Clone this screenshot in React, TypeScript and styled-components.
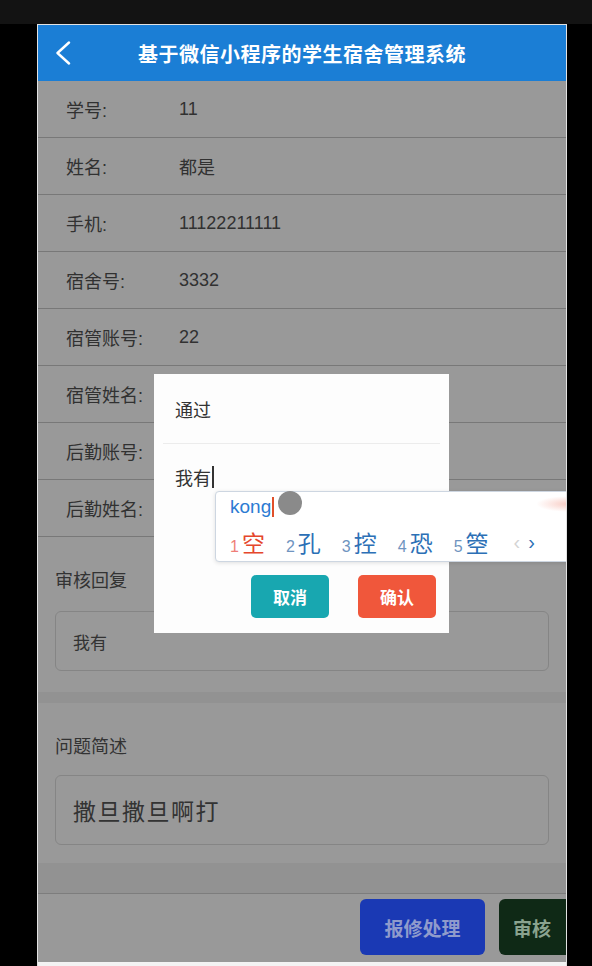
import React from "react";
import styled, { createGlobalStyle } from "styled-components";

const GlobalStyle = createGlobalStyle`
  html, body {
    margin: 0;
    padding: 0;
    background: #000;
  }
  * {
    box-sizing: border-box;
  }
  body {
    font-family: "Liberation Sans", "Noto Sans CJK SC", sans-serif;
  }
`;

const Screen = styled.div`
  width: 592px;
  height: 966px;
  overflow: hidden;
  background: #000;
  display: flex;
  flex-direction: column;
`;

const TopStrip = styled.div`
  height: 24px;
  flex-shrink: 0;
  background: #131313;
`;

const Phone = styled.div`
  position: relative;
  width: 530px;
  height: 942px;
  margin-left: 37px;
  border: 1px solid #e2e2e2;
  border-bottom: none;
  background: #f3f3f3;
  overflow: hidden;
`;

const NavBar = styled.div`
  height: 56px;
  background: #1b7ed5;
  display: grid;
  grid-template-columns: 1fr auto 1fr;
  align-items: center;
`;

const BackButton = styled.div`
  padding-left: 17px;
  display: flex;
  align-items: center;
`;

const Title = styled.div`
  color: #fff;
  font-size: 20px;
  font-weight: 700;
  letter-spacing: 0.5px;
  font-family: "Noto Sans CJK SC", sans-serif;
`;

const InfoList = styled.div`
  background: #fff;
`;

const InfoRow = styled.div`
  height: 57px;
  display: flex;
  align-items: center;
  padding-left: 28px;
  border-bottom: 1px solid #c9c9c9;
  font-size: 18px;
  color: #535353;
`;

const InfoLabel = styled.span`
  width: 113px;
  flex-shrink: 0;
`;

const InfoValue = styled.span``;

const Section = styled.div<{ $gapTop: number; $padBottom: number }>`
  background: #fff;
  margin-top: ${(p) => p.$gapTop}px;
  padding: 32px 17px ${(p) => p.$padBottom}px;
`;

const SectionLabel = styled.div<{ $gap: number }>`
  font-size: 18px;
  line-height: 24px;
  color: #565656;
  margin-bottom: ${(p) => p.$gap}px;
`;

const Field = styled.div<{ $height: number; $big?: boolean }>`
  height: ${(p) => p.$height}px;
  border: 1px solid #dedede;
  border-radius: 6px;
  display: flex;
  align-items: center;
  padding-left: 17px;
  color: #555;
  font-size: ${(p) => (p.$big ? "23px" : "17px")};
  letter-spacing: ${(p) => (p.$big ? "1.5px" : "0")};
`;

const Footer = styled.div`
  margin-top: 30px;
  border-top: 1px solid #d0d0d0;
  background: #fff;
  height: 69px;
  display: flex;
  justify-content: flex-end;
  gap: 14px;
  padding: 5px 0 7px;
  margin-right: -30px;
`;

const FooterButton = styled.div<{ $bg: string; $fg: string; $width: number }>`
  position: relative;
  z-index: 2;
  width: ${(p) => p.$width}px;
  height: 56px;
  border-radius: 6px;
  background: ${(p) => p.$bg};
  color: ${(p) => p.$fg};
  font-size: 19px;
  font-weight: 700;
  font-family: "Noto Sans CJK SC", sans-serif;
  display: flex;
  align-items: center;
  justify-content: center;
`;

const FooterTail = styled(FooterButton)`
  justify-content: flex-start;
  padding-left: 14px;
`;

const Mask = styled.div`
  position: absolute;
  top: 56px;
  left: 0;
  right: 0;
  bottom: 4px;
  background: rgba(0, 0, 0, 0.4);
  z-index: 1;
`;

const Dialog = styled.div`
  position: absolute;
  left: 116px;
  top: 349px;
  width: 295px;
  height: 259px;
  background: #fdfdfd;
  z-index: 3;
  padding: 0 9px;
  display: flex;
  flex-direction: column;
`;

const DialogField = styled.div<{ $height: number; $divider?: boolean }>`
  height: ${(p) => p.$height}px;
  display: flex;
  align-items: center;
  padding-left: 12px;
  font-size: 18px;
  color: #333;
  border-bottom: ${(p) => (p.$divider ? "1px solid #ececec" : "none")};
`;

const Caret = styled.span<{ $color: string; $h: number }>`
  display: inline-block;
  width: 1.5px;
  height: ${(p) => p.$h}px;
  background: ${(p) => p.$color};
  margin-left: 1px;
`;

const DialogActions = styled.div`
  margin-top: 65px;
  display: flex;
  justify-content: flex-end;
  gap: 29px;
  padding-right: 4px;
`;

const DialogButton = styled.div<{ $bg: string }>`
  width: 78px;
  height: 43px;
  border-radius: 5px;
  background: ${(p) => p.$bg};
  color: #fff;
  font-size: 17px;
  font-weight: 700;
  font-family: "Noto Sans CJK SC", sans-serif;
  display: flex;
  align-items: center;
  justify-content: center;
`;

const ImePanel = styled.div`
  position: absolute;
  left: 177px;
  top: 466px;
  width: 400px;
  height: 71px;
  background: #fff;
  border: 1px solid #cdd6e1;
  border-radius: 4px;
  box-shadow: 0 1px 4px rgba(0, 0, 0, 0.12);
  z-index: 4;
  padding-left: 14px;

  &::after {
    content: "";
    position: absolute;
    left: 320px;
    top: 4px;
    width: 64px;
    height: 16px;
    background: radial-gradient(
      ellipse at center,
      rgba(240, 130, 110, 0.4),
      rgba(255, 255, 255, 0) 70%
    );
  }
`;

const Composition = styled.div`
  height: 30px;
  display: flex;
  align-items: center;
  font-size: 19px;
  color: #2b7bd3;
`;

const TouchDot = styled.div`
  position: absolute;
  left: 62px;
  top: -1px;
  width: 24px;
  height: 24px;
  border-radius: 50%;
  background: #8a8a8a;
`;

const Candidates = styled.div`
  height: 40px;
  display: flex;
  align-items: center;
`;

const Candidate = styled.span<{ $active?: boolean }>`
  display: inline-flex;
  align-items: baseline;
  gap: 3px;
  margin-right: 21px;
  color: ${(p) => (p.$active ? "#e5472d" : "#2c70b6")};
  font-size: 23px;
  font-family: "Noto Sans CJK SC", sans-serif;

  & > b {
    font-weight: 400;
    font-size: 16px;
    font-family: "Liberation Sans", sans-serif;
    color: ${(p) => (p.$active ? "#ef7e78" : "#6f94c0")};
  }
`;

const Pager = styled.span<{ $on?: boolean }>`
  font-size: 20px;
  margin-left: ${(p) => (p.$on ? "8px" : "4px")};
  color: ${(p) => (p.$on ? "#2c70b6" : "#d4d4d4")};
`;

const rows = [
  ["学号:", "11"],
  ["姓名:", "都是"],
  ["手机:", "11122211111"],
  ["宿舍号:", "3332"],
  ["宿管账号:", "22"],
  ["宿管姓名:", ""],
  ["后勤账号:", ""],
  ["后勤姓名:", ""],
];

const candidates = ["空", "孔", "控", "恐", "箜"];

export default function App() {
  return (
    <>
      <GlobalStyle />
      <Screen>
        <TopStrip />
        <Phone>
          <NavBar>
            <BackButton>
              <svg width="16" height="24" viewBox="0 0 16 24">
                <polyline
                  points="14,1.5 2.5,12 14,22.5"
                  fill="none"
                  stroke="#fff"
                  strokeWidth="2.4"
                  strokeLinecap="round"
                  strokeLinejoin="round"
                />
              </svg>
            </BackButton>
            <Title>基于微信小程序的学生宿舍管理系统</Title>
            <div />
          </NavBar>

          <InfoList>
            {rows.map(([label, value]) => (
              <InfoRow key={label}>
                <InfoLabel>{label}</InfoLabel>
                <InfoValue>{value}</InfoValue>
              </InfoRow>
            ))}
          </InfoList>

          <Section $gapTop={0} $padBottom={21}>
            <SectionLabel $gap={18}>审核回复</SectionLabel>
            <Field $height={60}>我有</Field>
          </Section>

          <Section $gapTop={11} $padBottom={18}>
            <SectionLabel $gap={16}>问题简述</SectionLabel>
            <Field $height={70} $big>
              撒旦撒旦啊打
            </Field>
          </Section>

          <Footer>
            <FooterButton $bg="#1a39b4" $fg="#8f9bcc" $width={125}>
              报修处理
            </FooterButton>
            <FooterTail $bg="#0f2916" $fg="#8aa38f" $width={97}>
              审核
            </FooterTail>
          </Footer>

          <Mask />

          <Dialog>
            <DialogField $height={70} $divider>
              通过
            </DialogField>
            <DialogField $height={66}>
              我有
              <Caret $color="#333" $h={22} />
            </DialogField>
            <DialogActions>
              <DialogButton $bg="#18a7b0">取消</DialogButton>
              <DialogButton $bg="#f0573b">确认</DialogButton>
            </DialogActions>
          </Dialog>

          <ImePanel>
            <Composition>
              kong
              <Caret $color="#e0502a" $h={20} />
            </Composition>
            <TouchDot />
            <Candidates>
              {candidates.map((c, i) => (
                <Candidate key={c} $active={i === 0}>
                  <b>{i + 1}</b>
                  {c}
                </Candidate>
              ))}
              <Pager>‹</Pager>
              <Pager $on>›</Pager>
            </Candidates>
          </ImePanel>
        </Phone>
      </Screen>
    </>
  );
}
